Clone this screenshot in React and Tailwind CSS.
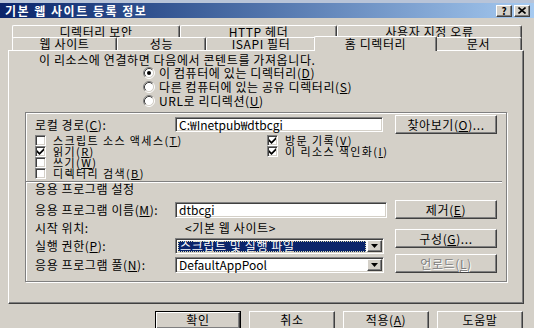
import React from "react";

function Raised({ className = "", children }) {
  return (
    <div
      className={`flex items-center justify-center bg-[#d4d0c8] border border-t-white border-l-white border-r-[#404040] border-b-[#404040] shadow-[inset_-1px_-1px_0_#808080] ${className}`}
    >
      {children}
    </div>
  );
}

function Field({ className = "", children }) {
  return (
    <div
      className={`flex items-center bg-white border border-t-[#808080] border-l-[#808080] border-r-white border-b-white shadow-[inset_1px_1px_0_#404040,inset_-1px_-1px_0_#d4d0c8] ${className}`}
    >
      {children}
    </div>
  );
}

function DropBtn() {
  return (
    <Raised className="w-[15px] h-[12px] shrink-0">
      <svg width="7" height="4" viewBox="0 0 7 4">
        <polygon points="0,0 7,0 3.5,4" fill="#000" />
      </svg>
    </Raised>
  );
}

function Tab({ className = "", children }) {
  return (
    <div
      className={`flex items-center justify-center bg-[#d4d0c8] border-t border-l border-r border-t-white border-l-white border-r-[#404040] shadow-[inset_-1px_0_0_#808080] rounded-t-[2px] ${className}`}
    >
      {children}
    </div>
  );
}

function Radio({ checked, children }) {
  return (
    <div className="h-[14px] flex items-center">
      <svg width="12" height="12" viewBox="0 0 12 12" className="shrink-0">
        <circle cx="6" cy="6" r="4.5" fill="#fff" />
        <path d="M2.11 9.89 A5.5 5.5 0 0 1 9.89 2.11" stroke="#808080" fill="none" />
        <path d="M9.89 2.11 A5.5 5.5 0 0 1 2.11 9.89" stroke="#ffffff" fill="none" />
        <path d="M2.82 9.18 A4.5 4.5 0 0 1 9.18 2.82" stroke="#404040" fill="none" />
        <path d="M9.18 2.82 A4.5 4.5 0 0 1 2.82 9.18" stroke="#d4d0c8" fill="none" />
        {checked && <circle cx="6" cy="6" r="2" fill="#000" />}
      </svg>
      <span className="ml-[4px] whitespace-nowrap">{children}</span>
    </div>
  );
}

function Check({ checked, children }) {
  return (
    <div className="h-[11px] flex items-center">
      <div className="w-[11px] h-[11px] shrink-0 flex items-center justify-center bg-white border border-t-[#808080] border-l-[#808080] border-r-white border-b-white shadow-[inset_1px_1px_0_#404040,inset_-1px_-1px_0_#d4d0c8]">
        {checked && (
          <svg width="7" height="7" viewBox="0 0 7 7">
            <polygon points="0,2 2.5,4.5 7,0 7,2.5 2.5,7 0,4.5" fill="#000" />
          </svg>
        )}
      </div>
      <span className="ml-[7px] whitespace-nowrap text-[11px] leading-[11px] tracking-[1.4px]">{children}</span>
    </div>
  );
}

function U({ children }) {
  return <span className="underline underline-offset-[1px]">{children}</span>;
}

export default function App() {
  return (
    <div className="w-[534px] h-[328px] overflow-hidden bg-[#d4d0c8] text-black text-[12px] leading-[12px] tracking-[0.6px] font-['Noto_Sans_CJK_KR','Noto_Sans',sans-serif] flex flex-col">
      <div className="h-[3px] shrink-0 bg-[#b8c4d8]" />
      {/* title bar */}
      <div className="h-[15px] shrink-0 flex items-center justify-between bg-linear-to-r from-[#0a246a] to-[#a6caf0] pl-[5px] pr-[4px]">
        <span className="text-white font-bold tracking-[1.5px] whitespace-nowrap">기본 웹 사이트 등록 정보</span>
        <div className="flex gap-[2px]">
          <Raised className="w-[16px] h-[12px] text-[10px] leading-[10px] font-bold tracking-normal">?</Raised>
          <Raised className="w-[16px] h-[12px]">
            <svg width="8" height="7" viewBox="0 0 8 7">
              <path d="M0.5 0.5 L7.5 6.5 M7.5 0.5 L0.5 6.5" stroke="#000" strokeWidth="1.6" />
            </svg>
          </Raised>
        </div>
      </div>

      {/* tabs */}
      <div className="ml-[12px] mt-[7px] w-[510px] shrink-0 flex flex-col">
        <div className="h-[13px] flex">
          <Tab className="w-[168px] h-[13px]">디렉터리 보안</Tab>
          <Tab className="w-[157px] h-[13px]">HTTP 헤더</Tab>
          <Tab className="w-[185px] h-[13px]">사용자 지정 오류</Tab>
        </div>
        <div className="h-[12px] flex items-end">
          <Tab className="w-[105px] h-[13px]">웹 사이트</Tab>
          <Tab className="w-[89px] h-[13px]">성능</Tab>
          <Tab className="w-[110px] h-[13px]">ISAPI 필터</Tab>
          <Tab className="relative z-10 w-[123px] h-[15px] -mx-[2px] -mb-[1px] pb-[1px]">홈 디렉터리</Tab>
          <Tab className="w-[87px] h-[13px]">문서</Tab>
        </div>
      </div>

      {/* panel */}
      <div className="ml-[8px] w-[516px] h-[254px] shrink-0 flex flex-col border border-t-white border-l-white border-r-[#404040] border-b-[#404040] shadow-[inset_-1px_-1px_0_#808080]">
        <div className="ml-[30px] mt-[3px] h-[12px] whitespace-nowrap">
          이 리소스에 연결하면 다음에서 콘텐트를 가져옵니다.
        </div>
        <div className="ml-[134px] flex flex-col">
          <Radio checked>
            이 컴퓨터에 있는 디렉터리(<U>D</U>)
          </Radio>
          <Radio>
            다른 컴퓨터에 있는 공유 디렉터리(<U>S</U>)
          </Radio>
          <Radio>
            URL로 리디렉션(<U>U</U>)
          </Radio>
        </div>

        {/* group box */}
        <div className="ml-[16px] mt-[4px] w-[482px] h-[170px] flex flex-col border border-[#808080] shadow-[inset_1px_1px_0_#fff,1px_1px_0_#fff]">
          <div className="mt-[2px] h-[19px] pl-[9px] flex items-center">
            <span className="w-[140px] whitespace-nowrap">
              로컬 경로(<U>C</U>):
            </span>
            <div className="w-[220px] flex items-center">
              <Field className="w-[208px] h-[15px] pl-[3px] tracking-normal">C:₩Inetpub₩dtbcgi</Field>
            </div>
            <Raised className="w-[102px] h-[19px]">
              찾아보기(<U>O</U>)...
            </Raised>
          </div>

          <div className="mt-[1px] pl-[9px] flex">
            <div className="w-[232px] flex flex-col">
              <Check>
                스크립트 소스 액세스(<U>T</U>)
              </Check>
              <Check checked>
                읽기(<U>R</U>)
              </Check>
              <Check>
                쓰기(<U>W</U>)
              </Check>
              <Check>
                디렉터리 검색(<U>B</U>)
              </Check>
            </div>
            <div className="flex flex-col">
              <Check checked>
                방문 기록(<U>V</U>)
              </Check>
              <Check checked>
                이 리소스 색인화(<U>I</U>)
              </Check>
            </div>
          </div>

          <div className="mt-[2px] mr-[4px] h-[2px] border-t border-t-[#808080] border-b border-b-white" />

          <div className="pl-[9px] h-[12px] whitespace-nowrap">응용 프로그램 설정</div>

          <div className="mt-[5px] pl-[9px] flex">
            <div className="w-[360px] flex flex-col">
              <div className="h-[20px] flex items-center">
                <span className="w-[140px] whitespace-nowrap">
                  응용 프로그램 이름(<U>M</U>):
                </span>
                <Field className="w-[212px] h-[16px] pl-[3px] tracking-normal">dtbcgi</Field>
              </div>
              <div className="h-[16px] flex items-center">
                <span className="w-[150px] whitespace-nowrap">시작 위치:</span>
                <span className="whitespace-nowrap">&lt;기본 웹 사이트&gt;</span>
              </div>
              <div className="mt-[2px] h-[16px] flex items-center">
                <span className="w-[140px] whitespace-nowrap">
                  실행 권한(<U>P</U>):
                </span>
                <Field className="w-[209px] h-[16px] pl-[2px] pr-[1px]">
                  <div className="flex-1 h-[11px] mr-[1px] flex items-center pl-[2px] bg-[#0a246a] text-white whitespace-nowrap outline-1 outline-dotted outline-[#d8d8b0] -outline-offset-1">
                    스크립트 및 실행 파일
                  </div>
                  <DropBtn />
                </Field>
              </div>
              <div className="mt-[3px] h-[16px] flex items-center">
                <span className="w-[140px] whitespace-nowrap">
                  응용 프로그램 풀(<U>N</U>):
                </span>
                <Field className="w-[209px] h-[16px] pl-[3px] pr-[1px] tracking-normal">
                  <span className="flex-1 whitespace-nowrap">DefaultAppPool</span>
                  <DropBtn />
                </Field>
              </div>
            </div>
            <div className="flex flex-col">
              <Raised className="w-[102px] h-[19px]">
                제거(<U>E</U>)
              </Raised>
              <Raised className="mt-[10px] w-[102px] h-[19px]">
                구성(<U>G</U>)...
              </Raised>
              <Raised className="mt-[6px] w-[102px] h-[19px] text-[#808080] [text-shadow:1px_1px_0_#fff]">
                언로드(<U>L</U>)
              </Raised>
            </div>
          </div>
        </div>
      </div>

      {/* bottom buttons */}
      <div className="mt-[7px] ml-[155px] flex gap-[8px] shrink-0">
        <div className="w-[86px] h-[19px] border border-black flex">
          <Raised className="flex-1 pb-[2px]">확인</Raised>
        </div>
        <Raised className="w-[86px] h-[19px] pb-[2px]">취소</Raised>
        <Raised className="w-[86px] h-[19px] pb-[2px]">
          적용(<U>A</U>)
        </Raised>
        <Raised className="w-[86px] h-[19px] pb-[2px]">도움말</Raised>
      </div>
    </div>
  );
}
